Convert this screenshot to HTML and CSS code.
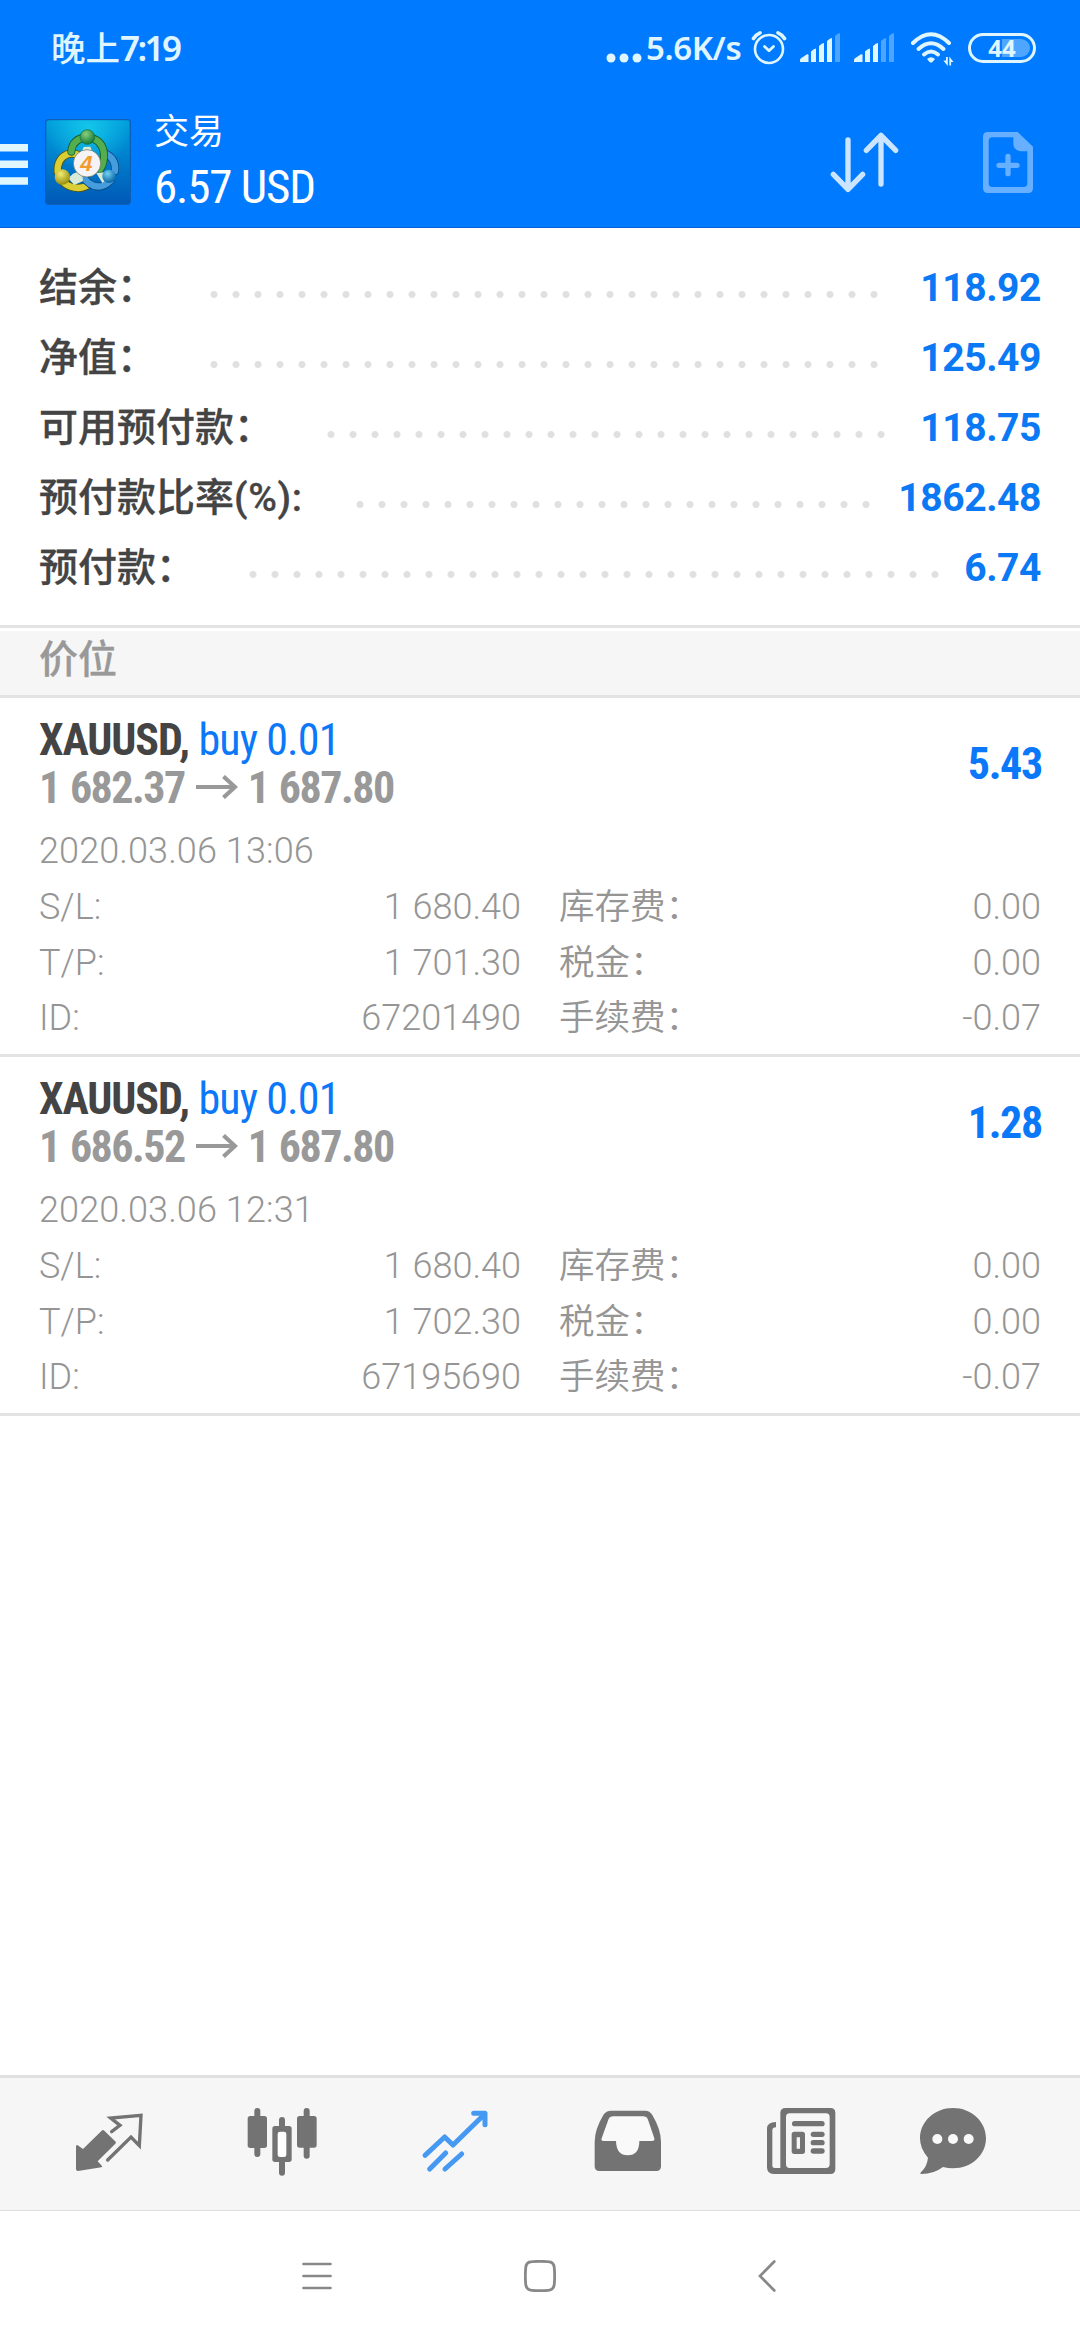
FILE: index.html
```html
<!DOCTYPE html>
<html lang="zh-CN">
<head>
<meta charset="utf-8">
<title>交易</title>
<link rel="stylesheet" href="styles.css">
</head>
<body>
<div class="screen">
  <header class="top">
    <div class="status">
      <span class="clock">晚上<span class="clock-digits">7:19</span></span>
      <div class="status-right">
        <svg class="st-dots" width="36" height="10" viewBox="0 0 36 10"><circle cx="5" cy="5" r="4.5"/><circle cx="18" cy="5" r="4.5"/><circle cx="31" cy="5" r="4.5"/></svg>
        <span class="speed">5.6K/s</span>
        <svg class="st-alarm" width="36" height="36" viewBox="0 0 36 36" fill="none" stroke="#e0f6ff" stroke-linecap="round" stroke-linejoin="round">
          <circle cx="18" cy="19" r="14" stroke-width="2.6"/><path d="M13.5 16.5l4.5 4.3 4.5-4.3" stroke-width="2.8"/><path d="M2.5 8.5Q5 4.5 9 2.8M33.5 8.5Q31 4.5 27 2.8" stroke-width="3.6"/>
        </svg>
        <svg class="st-sig1" width="40" height="30" viewBox="0 0 40 30" fill="#e0f6ff">
          <path d="M0 29v-2q0-1 1-1.800L7 21.300q1.500-.6 1.500 1V29z"/><path d="M11 18.500q3-3 5-3V29h-5zM19 13q3-3 5-3V29h-5zM27 8q3-3 5-3V29h-5z"/><path d="M35 3q3-3 5-3V29h-5z" opacity=".35"/>
        </svg>
        <svg class="st-sig2" width="40" height="30" viewBox="0 0 40 30" fill="#e0f6ff">
          <path d="M0 29v-2q0-1 1-1.800L7 21.300q1.500-.6 1.500 1V29z"/><path d="M11 18.500q3-3 5-3V29h-5zM19 13q3-3 5-3V29h-5z"/><path d="M27 8q3-3 5-3V29h-5zM35 3q3-3 5-3V29h-5z" opacity=".35"/>
        </svg>
        <svg class="st-wifi" width="44" height="34" viewBox="0 0 44 34">
          <g fill="none" stroke="#e0f6ff" stroke-width="4" stroke-linecap="round"><path d="M3 11Q21-6.500 39 11"/><path d="M8.500 17Q21 5.500 33.500 17"/><path d="M14 22.500Q21 16.500 28 22.500"/></g>
          <path d="M17 27Q21 23.500 25 27L22.500 30Q21 31 19.500 30zM36 25h1.800v9l-4.500-5.500h2.700zM39.300 33.500v-9l4.200 5.500h-2.400v3.500z" fill="#e0f6ff"/>
        </svg>
        <div class="battery"><span class="battery-level"></span><span class="battery-text">44</span></div>
      </div>
    </div>
    <div class="appbar">
      <svg class="menu" width="28" height="42" viewBox="0 0 28 42" fill="#e0f6ff"><path d="M0 0h28v7.500H0zM0 16.600h28v7.500H0zM0 33.200h28v7.500H0z"/></svg>
      <svg class="logo" width="86" height="86" viewBox="0 0 258 258">
        <defs>
          <linearGradient id="bg" x1="0" y1="0" x2="0" y2="1"><stop offset="0" stop-color="#00a0dc"/><stop offset=".5" stop-color="#007bcb"/><stop offset="1" stop-color="#0058b5"/></linearGradient>
          <radialGradient id="glow" cx=".5" cy=".1" r=".5"><stop offset="0" stop-color="#14c6ea"/><stop offset="1" stop-color="#14c6ea" stop-opacity="0"/></radialGradient>
          <radialGradient id="green" cx=".4" cy=".3" r=".7"><stop offset="0" stop-color="#8ad07c"/><stop offset="1" stop-color="#127a3c"/></radialGradient>
          <radialGradient id="yellow" cx=".4" cy=".3" r=".7"><stop offset="0" stop-color="#f2ec70"/><stop offset="1" stop-color="#988f10"/></radialGradient>
          <radialGradient id="blue" cx=".4" cy=".3" r=".7"><stop offset="0" stop-color="#74d0f2"/><stop offset="1" stop-color="#0866a5"/></radialGradient>
        </defs>
        <rect x="2" y="2" width="254" height="254" rx="9" fill="url(#bg)" stroke="#0e5fb8" stroke-width="4"/>
        <rect x="4" y="4" width="250" height="250" rx="8" fill="url(#glow)"/>
        <g fill="none" stroke-linecap="round">
          <path d="M66 106Q36 120 38 158Q52 206 100 207Q120 206 132 196M66 106Q90 100 108 112" stroke="#57560f" stroke-width="24"/>
          <path d="M66 106Q36 120 38 158Q52 206 100 207Q120 206 132 196M66 106Q90 100 108 112" stroke="#d9cf35" stroke-width="19"/>
          <path d="M178 102Q214 118 210 156M196 186Q164 215 134 194Q116 180 112 164" stroke="#0a4c85" stroke-width="24"/>
          <path d="M178 102Q214 118 210 156M196 186Q164 215 134 194Q116 180 112 164" stroke="#459ddd" stroke-width="19"/>
          <path d="M79 98Q82 58 127 55Q172 60 177 104Q178 132 166 150" stroke="#145f2c" stroke-width="24"/>
          <path d="M79 98Q82 58 127 55Q172 60 177 104Q178 132 166 150" stroke="#54ae4d" stroke-width="19"/>
        </g>
        <path d="M116 84l20-1 14 34h-48zM70 178l14-14 26-10 4 32-26 12zM180 160l16 14-24 18-18-30z" fill="#d9ead6"/>
        <circle cx="127" cy="54" r="22" fill="url(#green)" stroke="#0f6a35" stroke-width="2"/>
        <circle cx="52" cy="174" r="23" fill="url(#yellow)"/>
        <circle cx="192" cy="172" r="20" fill="url(#blue)"/>
        <circle cx="126" cy="133" r="41" fill="#f5f3f6" stroke="#5a6a50" stroke-width="2"/>
        <text x="124" y="157" text-anchor="middle" class="logo-num">4</text>
      </svg>
      <div class="title">
        <div class="title-name">交易</div>
        <div class="title-sum">6.57 USD</div>
      </div>
      <svg class="sort" width="70" height="62" viewBox="0 0 210 186" fill="none" stroke="#cce5ff" stroke-width="16" stroke-linecap="round" stroke-linejoin="round"><path d="M54 27V175M10 130l44 45 44-45M153 159V13M109 58l44-45 44 45"/></svg>
      <svg class="neworder" width="50" height="61" viewBox="0 0 150 183">
        <path fill="#66b0ff" fill-rule="evenodd" d="M14 0H104L150 44V168Q150 183 136 183H14Q0 183 0 168V15Q0 0 14 0zM28 16Q17 16 17 28V152Q17 165 28 165H122Q133 165 133 152V58H112Q91 54 91 34V16z"/>
        <path d="M75 73v52M48 100h54" stroke="#66b0ff" stroke-width="16" stroke-linecap="round"/>
      </svg>
    </div>
  </header>

  <section class="summary">
    <div class="row"><span class="label">结余：</span><span class="dots" style="--n:31"></span><span class="value">118.92</span></div>
    <div class="row"><span class="label">净值：</span><span class="dots" style="--n:31"></span><span class="value">125.49</span></div>
    <div class="row"><span class="label">可用预付款：</span><span class="dots" style="--n:26"></span><span class="value">118.75</span></div>
    <div class="row"><span class="label">预付款比率<span class="unit">(%):</span></span><span class="dots" style="--n:24"></span><span class="value">1862.48</span></div>
    <div class="row"><span class="label">预付款：</span><span class="dots" style="--n:32"></span><span class="value">6.74</span></div>
  </section>

  <h2 class="section">价位</h2>

  <article class="position">
    <div class="head">
      <div>
        <div class="line"><b class="symbol">XAUUSD,</b> <span class="side">buy 0.01</span></div>
        <div class="line prices">1 682.37<svg class="arrow" width="42" height="24" viewBox="0 0 42 24"><path d="M0 12H38M27.500 1.500L39 12 27.500 22.500" fill="none" stroke="#999" stroke-width="4.200"/></svg>1 687.80</div>
      </div>
      <div class="profit">5.43</div>
    </div>
    <div class="date">2020.03.06 13:06</div>
    <dl class="details">
      <div class="cell"><dt>S/L:</dt><dd>1 680.40</dd></div><div class="cell"><dt class="zh">库存费：</dt><dd>0.00</dd></div>
      <div class="cell"><dt>T/P:</dt><dd>1 701.30</dd></div><div class="cell"><dt class="zh">税金：</dt><dd>0.00</dd></div>
      <div class="cell"><dt>ID:</dt><dd>67201490</dd></div><div class="cell"><dt class="zh">手续费：</dt><dd>-0.07</dd></div>
    </dl>
  </article>

  <article class="position">
    <div class="head">
      <div>
        <div class="line"><b class="symbol">XAUUSD,</b> <span class="side">buy 0.01</span></div>
        <div class="line prices">1 686.52<svg class="arrow" width="42" height="24" viewBox="0 0 42 24"><path d="M0 12H38M27.500 1.500L39 12 27.500 22.500" fill="none" stroke="#999" stroke-width="4.200"/></svg>1 687.80</div>
      </div>
      <div class="profit">1.28</div>
    </div>
    <div class="date">2020.03.06 12:31</div>
    <dl class="details">
      <div class="cell"><dt>S/L:</dt><dd>1 680.40</dd></div><div class="cell"><dt class="zh">库存费：</dt><dd>0.00</dd></div>
      <div class="cell"><dt>T/P:</dt><dd>1 702.30</dd></div><div class="cell"><dt class="zh">税金：</dt><dd>0.00</dd></div>
      <div class="cell"><dt>ID:</dt><dd>67195690</dd></div><div class="cell"><dt class="zh">手续费：</dt><dd>-0.07</dd></div>
    </dl>
  </article>

  <nav class="tabs">
    <svg viewBox="25 0 240 300"><path d="M50 150l17 12 56-55q4-4 8 0l34 33q2 3-1 6l-53 53 13 14q2 3-2 4l-70 11q-6 0-6-6V152z" fill="#737373"/><path d="M153 110l25-19-28-22 91-8-5 91-25-26-70 69" fill="none" stroke="#737373" stroke-width="10" stroke-linecap="round"/></svg>
    <svg viewBox="543 0 240 300"><g fill="#737373"><rect x="580" y="39" width="18" height="147" rx="9"/><rect x="560" y="63" width="58" height="96" rx="8"/><rect x="728" y="39" width="18" height="152" rx="9"/><rect x="708" y="63" width="59" height="95" rx="8"/><rect x="654" y="66" width="18" height="176" rx="9"/><rect x="634" y="93" width="58" height="108" rx="8"/></g><rect x="650" y="110" width="26" height="76" rx="7" fill="#fff"/></svg>
    <svg viewBox="1062 0 240 300" fill="none" stroke="#4599f2" stroke-width="15" stroke-linecap="round" stroke-linejoin="round"><path d="M1092 181L1151 126 1176 150 1272 56M1238 55H1272V89M1106 222L1154 174M1152 222L1202 177"/></svg>
    <svg viewBox="8 0 240 300"><path d="M78 47H180Q193 47 201 60Q227 104 227 140V214Q227 228 213 228H42Q28 228 28 214V140Q28 104 54 60Q62 47 78 47z" fill="#737373"/><path d="M84 64H173Q184 64 188 74L207 130Q209 138 200 138H162Q162 181 127 181Q93 181 92 138H55Q46 138 49 130L69 74Q73 64 84 64z" fill="#f9f9f9"/></svg>
    <svg viewBox="528 0 240 300"><path fill="#737373" fill-rule="evenodd" d="M602 39H736Q751 39 751 54V222Q751 237 736 237H566Q546 237 546 217V101Q546 81 573 81V97Q562 97 562 106V212Q562 219 569 219H586V54Q586 39 602 39zM614 55Q603 55 603 66V208Q603 219 614 219H723Q734 219 734 208V66Q734 55 723 55z"/><path d="M629 86H711M685 118H711M685 143H711M685 168H711" stroke="#737373" stroke-width="16" stroke-linecap="round"/><path fill="#737373" fill-rule="evenodd" d="M628 110H652Q660 110 660 118V169Q660 177 652 177H628Q620 177 620 169V118Q620 110 628 110zM635 127V161H645V127z"/></svg>
    <svg viewBox="984 0 240 300"><path d="M1104 39C1160 39 1203 80 1203 130S1160 220 1104 220Q1090 220 1074 216Q1046 237 1010 237Q1002 236 1009 230Q1026 215 1029 188Q1005 162 1005 130C1005 80 1048 39 1104 39z" fill="#737373"/><g fill="#f9f9f9"><circle cx="1057" cy="132" r="15"/><circle cx="1104" cy="132" r="15"/><circle cx="1151" cy="132" r="15"/></g></svg>
  </nav>

  <nav class="sysnav">
    <svg width="30" height="28" viewBox="0 0 30 28"><path d="M1.500 2h27M1.500 14h27M1.500 26h27" stroke="#888" stroke-width="2.700" stroke-linecap="round"/></svg>
    <svg width="32" height="32" viewBox="0 0 32 32"><path d="M8 1.700Q16 .9 24 1.700Q30 2 30.300 8Q31 16 30.300 24Q30 30 24 30.300Q16 31 8 30.300Q2 30 1.700 24Q1 16 1.700 8Q2 2 8 1.700z" fill="none" stroke="#888" stroke-width="2.800"/></svg>
    <svg width="18" height="32" viewBox="0 0 18 32"><path d="M16.300 1.500L2 16l14.300 14.500" fill="none" stroke="#888" stroke-width="2.700" stroke-linecap="round"/></svg>
  </nav>
</div>
</body>
</html>
```
FILE: styles.css
```css
* { box-sizing: border-box; }
body { margin: 0; background: #fff; }
svg { display: block; flex: none; }

.screen {
  width: 1080px;
  height: 2340px;
  display: flex;
  flex-direction: column;
  background: #fff;
  font-family: Roboto, "Noto Sans CJK SC", sans-serif;
  overflow: hidden;
}

/* Status bar and app bar */
.top {
  height: 228px;
  background: #007aff;
  border-bottom: 1px solid #0a63d0;
}
.status {
  height: 96px;
  display: flex;
  justify-content: space-between;
  padding: 0 44px 0 51px;
  color: #e0f6ff;
}
.clock {
  font: 500 34.500px/96px "Noto Sans CJK SC", sans-serif;
  margin-top: -2px;
}
.clock-digits {
  font: 600 35px "Noto Sans", sans-serif;
  letter-spacing: -2.600px;
}
.status-right { display: flex; align-items: center; }
.st-dots { fill: #e0f6ff; margin: 19px 4px 0 0; }
.speed {
  width: 105px;
  font: 600 33px/96px "Noto Sans", sans-serif;
  letter-spacing: -.400px;
}
.st-alarm { margin: 0 13px 0 0; }
.st-sig1 { margin-right: 14px; }
.st-sig2 { margin-right: 16px; }
.st-wifi { margin: 2px 14px 0 0; }
.battery {
  position: relative;
  width: 68px;
  height: 30px;
  border: 3px solid #e0f6ff;
  border-radius: 15px;
}
.battery-level {
  position: absolute;
  right: 3px;
  top: 3px;
  width: 28px;
  height: 18px;
  border-radius: 0 9px 9px 0;
  background: #4ea6ff;
}
.battery-text {
  position: absolute;
  inset: 0;
  text-align: center;
  font: 700 24px/24px "Noto Sans", sans-serif;
}

.appbar { display: flex; align-items: flex-start; height: 131px; }
.menu { margin-top: 48px; }
.logo { margin: 23px 0 0 17px; }
.logo-num { font: italic 700 66px "Liberation Sans", sans-serif; fill: #f39a2c; }
.title { margin: 14px 0 0 23px; color: #fff; flex: 1; }
.title-name { font-size: 35px; line-height: 46px; }
.title-sum { font: 47px/62px "Roboto Condensed", sans-serif; letter-spacing: -1.200px; }
.sort { margin: 35px 83px 0 0; }
.neworder { margin: 36px 47px 0 0; }

/* Account summary */
.summary {
  padding: 25px 39px 22px;
  border-bottom: 3px solid #e3e3e3;
}
.row { display: flex; height: 70px; line-height: 70px; font-size: 39px; }
.label { font-weight: 500; color: #444; -webkit-text-stroke: .300px; }
.unit { letter-spacing: .650px; }
.dots {
  width: calc(var(--n) * 22px);
  margin-left: 46.500px;
  background: radial-gradient(circle at 11px 41.500px, #e0e0e0 3px, transparent 4px) 0 0 / 22px 70px repeat-x;
}
.value { margin-left: auto; font-weight: 700; letter-spacing: -.400px; color: #0b78f4; }

.section {
  height: 70px;
  margin: 0;
  padding-left: 39px;
  border-bottom: 3px solid #e3e3e3;
  background: linear-gradient(#fff 3px, #f6f6f6 3px);
  font-size: 39px;
  font-weight: 500;
  line-height: 64px;
  color: #999;
  -webkit-text-stroke: .300px;
}

/* Open positions */
.position {
  height: 359px;
  padding: 18px 39px 0;
  border-bottom: 3px solid #e3e3e3;
  color: #999;
}
.head { display: flex; justify-content: space-between; align-items: center; }
.line, .profit { font: 44px/48px "Roboto Condensed", sans-serif; }
.symbol { color: #444; letter-spacing: -1.100px; }
.side { color: #0a78f8; letter-spacing: -.800px; }
.line { word-spacing: -.500px; }
.prices { display: flex; font-weight: 700; letter-spacing: -1.500px; word-spacing: 1.500px; }
.arrow { margin: 11px 10px 0 11px; }
.profit { font-weight: 700; color: #0a78f8; letter-spacing: -1.300px; margin-right: -1px; }
.date, .details { font-size: 36px; font-weight: 360; color: #959595; }
.date { margin-top: 11px; line-height: 56px; letter-spacing: .100px; }
.details {
  display: grid;
  grid-template-columns: 1fr 1fr;
  column-gap: 38px;
  margin: 1px 0 0;
  line-height: 55.500px;
}
.cell { display: flex; justify-content: space-between; }
.zh { font-weight: 350; font-size: 35.500px; }
dd { margin: 0; }

/* Bottom tabs */
.tabs {
  margin-top: auto;
  height: 136px;
  display: grid;
  grid-template-columns: repeat(5, 173px) 132px;
  justify-items: center;
  padding: 17px 0 0 22px;
  border-top: 3px solid #e0e0e0;
  border-bottom: 1px solid #dedede;
  background: #f6f6f6;
}
.tabs svg { width: 80px; height: 100px; }

.sysnav {
  height: 129px;
  display: grid;
  grid-template-columns: 223px 223px 231px;
  justify-content: center;
  justify-items: center;
  align-items: center;
  padding-left: 8px;
}
```
